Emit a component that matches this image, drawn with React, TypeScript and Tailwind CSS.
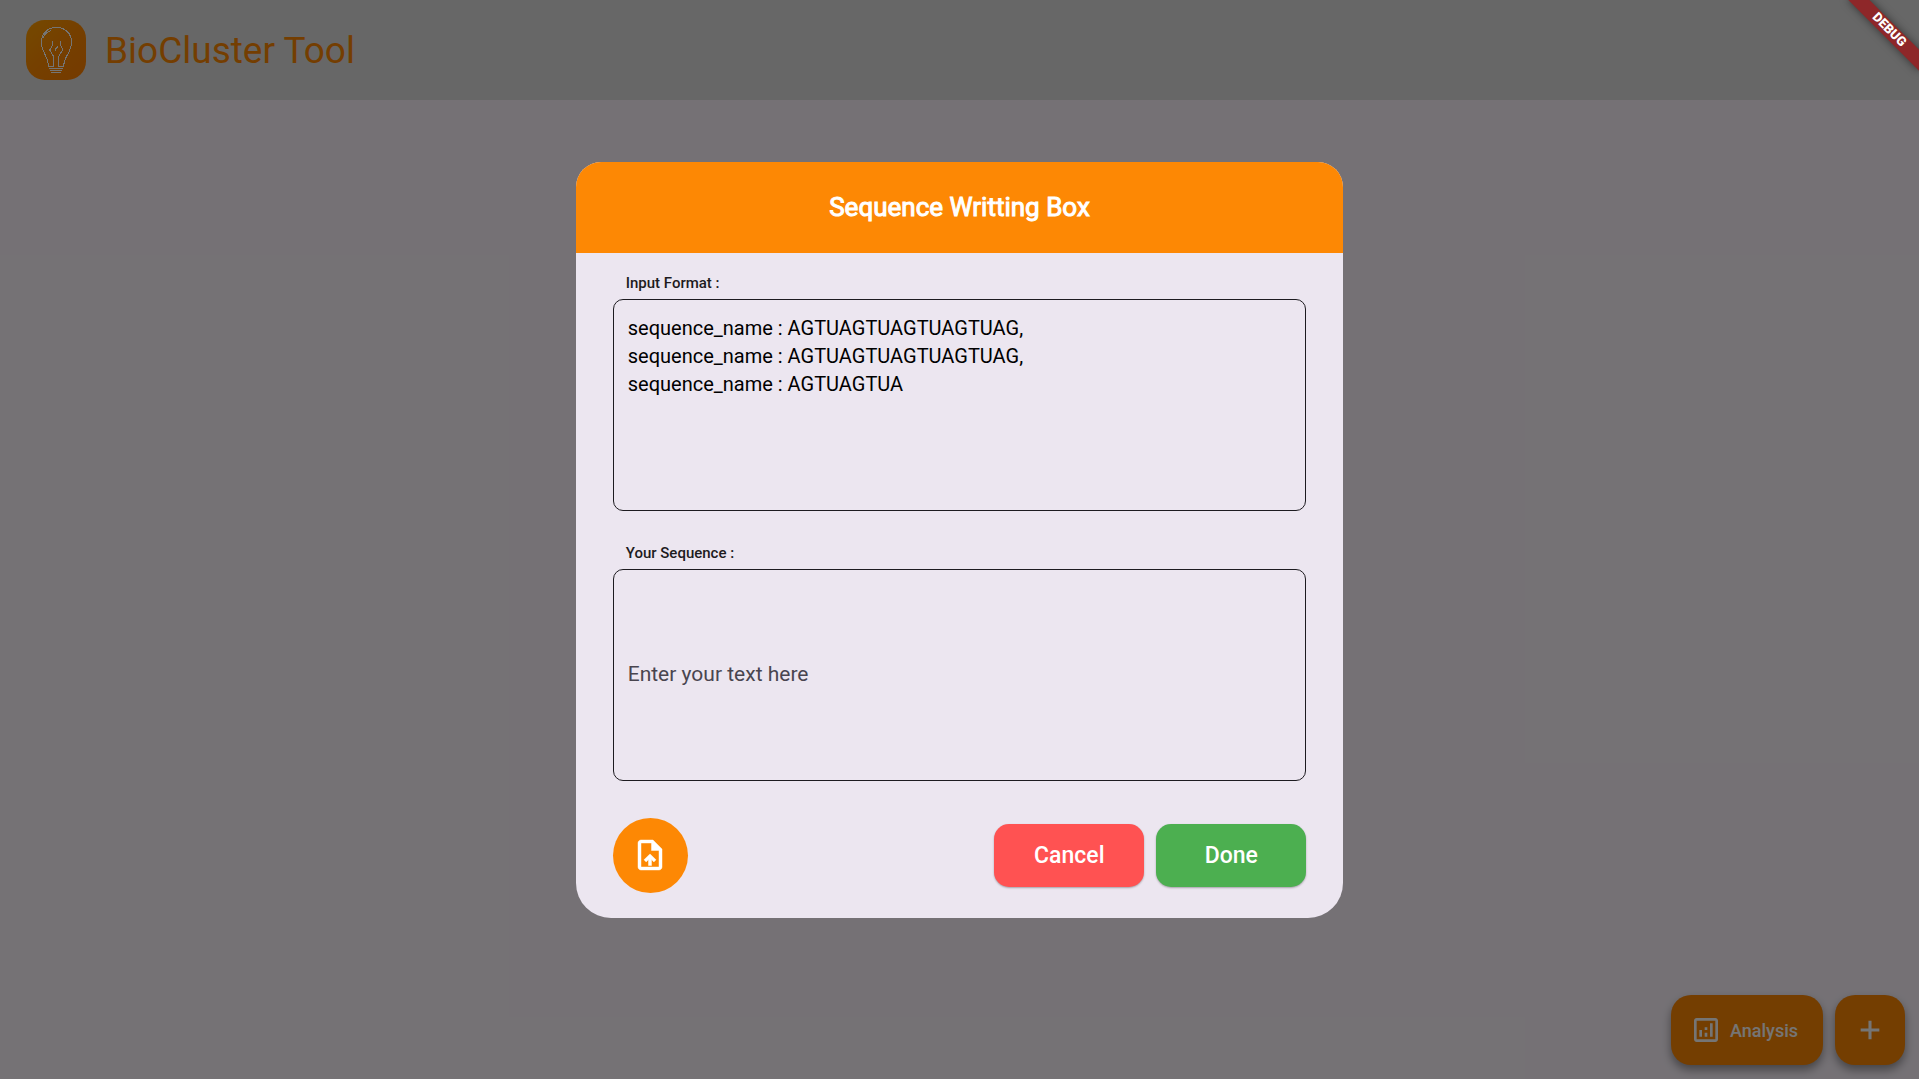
import { MdOutlineAnalytics } from "react-icons/md";

const SAMPLE = [
  "sequence_name : AGTUAGTUAGTUAGTUAG,",
  "sequence_name : AGTUAGTUAGTUAGTUAG,",
  "sequence_name : AGTUAGTUA",
].join("\n");

function Logo() {
  return (
    <svg viewBox="0 0 180 180" className="size-[60px]" aria-hidden="true">
      <defs>
        <linearGradient id="logo-fill" x1="0" y1="0" x2="1" y2="1">
          <stop offset="0" stopColor="#ffa000" />
          <stop offset="0.5" stopColor="#ff8a00" />
          <stop offset="1" stopColor="#ff8000" />
        </linearGradient>
      </defs>
      <rect width="180" height="180" rx="56" fill="url(#logo-fill)" />
      <g fill="none" stroke="#ffffff" strokeWidth="3" shapeRendering="crispEdges">
        <path d="M67 139 C67 108 46 96 46 67 C46 41 66 22 91 22 C117 22 137 41 137 67 C137 96 114 108 113 139 H98 L99 108 L111 88 L103 75 V63" />
        <path d="M67 139 H83 L82 108 L71 90 L79 77 V63" />
        <path d="M88 92 V87 L95 81 V77" />
        <path d="M52 55 C54 43 62 36 74 32" />
        <path d="M69 146 H112 M72 152 H109 M75 158 H106" />
      </g>
    </svg>
  );
}

function UploadFileIcon() {
  return (
    <svg
      viewBox="0 0 24 24"
      className="size-9"
      fill="currentColor"
      stroke="currentColor"
      strokeWidth="0.3"
      strokeLinejoin="round"
      aria-hidden="true"
    >
      <path d="M14 2H6c-1.1 0-1.99.9-1.99 2L4 20c0 1.1.89 2 1.99 2H18c1.1 0 2-.9 2-2V8l-6-6zm4 18H6V4h7v5h5v11z" />
      <path d="M8 15.2l1.41 1.41L11 15.04V19h2v-3.96l1.59 1.59L16 15.21 12.01 11.3z" />
    </svg>
  );
}

function AddIcon() {
  return (
    <svg
      viewBox="0 0 24 24"
      className="size-8"
      fill="none"
      stroke="currentColor"
      strokeWidth="2.3"
      aria-hidden="true"
    >
      <path d="M5 12H19M12 5V19" />
    </svg>
  );
}

function DebugRibbon() {
  return (
    <div className="pointer-events-none absolute top-[35px] right-[-50px] z-20 h-[15px] w-[100px] origin-[50px_-35px] rotate-45 bg-[#8e2729] text-center text-[13px] leading-[14px] font-black text-white shadow-[0_0_8px_rgba(0,0,0,0.5)]">
      DEBUG
    </div>
  );
}

const fieldClass =
  "block h-[212px] w-full resize-none rounded-[10px] border border-[#1d1b20] bg-transparent px-[14px] leading-7 text-black outline-none";
const labelClass = "block pl-[13px] text-[15px] leading-6 font-medium text-[#1d1b20]";
const actionClass =
  "h-[63px] w-[150px] rounded-[15px] pt-0.5 shadow-[0_1px_2px_rgba(0,0,0,0.3)]";

function SequenceDialog() {
  return (
    <section
      role="dialog"
      aria-modal="true"
      aria-labelledby="dialog-title"
      className="w-2/5 min-w-[560px] overflow-hidden rounded-t-[25px] rounded-b-[35px] bg-[#ece6f0]"
    >
      <h2
        id="dialog-title"
        className="bg-[#fd8804] py-7 text-center text-[26px] leading-[35px] font-normal text-white [-webkit-text-stroke:1px_white]"
      >
        Sequence Writting Box
      </h2>
      <form className="px-[37px] pt-[18px] pb-[25px]" onSubmit={(e) => e.preventDefault()}>
        <label htmlFor="format" className={labelClass}>
          Input Format :
        </label>
        <textarea
          id="format"
          readOnly
          defaultValue={SAMPLE}
          className={`${fieldClass} mt-1 py-[14px] text-[20px]`}
        />
        <label htmlFor="sequence" className={`${labelClass} mt-[30px]`}>
          Your Sequence :
        </label>
        <textarea
          id="sequence"
          placeholder="Enter your text here"
          className={`${fieldClass} mt-1 py-[90px] text-[21px] placeholder:text-[#49454f]`}
        />
        <div className="mt-[37px] flex items-center justify-between">
          <button
            type="button"
            aria-label="Upload file"
            className="flex size-[75px] items-center justify-center rounded-full bg-[#fd8804] text-white"
          >
            <UploadFileIcon />
          </button>
          <div className="flex gap-3 text-[23px] font-medium text-white">
            <button type="button" className={`${actionClass} bg-[#ff5252]`}>
              Cancel
            </button>
            <button type="submit" className={`${actionClass} bg-[#4caf50]`}>
              Done
            </button>
          </div>
        </div>
      </form>
    </section>
  );
}

const fabClass =
  "flex h-[70px] items-center rounded-[20px] bg-[#fd8804] text-white shadow-[0_5px_10px_rgba(0,0,0,0.4)]";

export default function App() {
  return (
    <div className="relative flex min-h-screen flex-col overflow-hidden bg-[#fef7ff] font-['Roboto',sans-serif]">
      <header className="flex h-[100px] items-center gap-[19px] bg-[#e0e0e0] pl-[26px]">
        <Logo />
        <h1 className="pt-0.5 text-[37px] leading-[48px] text-[#fd8804]">BioCluster Tool</h1>
      </header>
      <main className="flex flex-1 items-end justify-end gap-3 p-[14px]">
        <button type="button" className={`${fabClass} gap-2 pr-[25px] pl-[19px] text-[18px] font-medium`}>
          <MdOutlineAnalytics className="size-8" />
          Analysis
        </button>
        <button type="button" aria-label="Add" className={`${fabClass} w-[70px] justify-center`}>
          <AddIcon />
        </button>
      </main>
      <div className="absolute inset-0 z-10 flex items-center justify-center bg-black/54">
        <SequenceDialog />
      </div>
      <DebugRibbon />
    </div>
  );
}
